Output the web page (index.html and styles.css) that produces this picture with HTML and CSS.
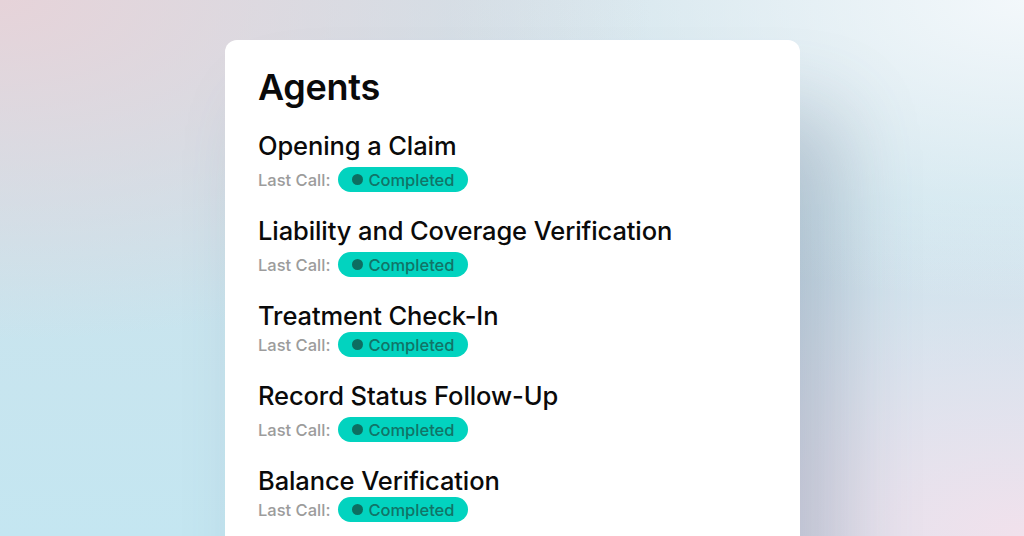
FILE: index.html
```html
<!DOCTYPE html>
<html lang="en">
<head>
    <meta charset="UTF-8">
    <meta name="viewport" content="width=device-width, initial-scale=1.0">
    <title>Agents</title>
    <link rel="stylesheet" href="styles.css">
</head>
<body>
    <div class="card">
        <h1>Agents</h1>

        <div class="agent">
            <h2>Opening a Claim</h2>
            <div class="last-call">
                <span class="label">Last Call:</span>
                <span class="badge"><span class="dot"></span>Completed</span>
            </div>
        </div>

        <div class="agent">
            <h2>Liability and Coverage Verification</h2>
            <div class="last-call">
                <span class="label">Last Call:</span>
                <span class="badge"><span class="dot"></span>Completed</span>
            </div>
        </div>

        <div class="agent tight">
            <h2>Treatment Check-In</h2>
            <div class="last-call">
                <span class="label">Last Call:</span>
                <span class="badge"><span class="dot"></span>Completed</span>
            </div>
        </div>

        <div class="agent">
            <h2>Record Status Follow-Up</h2>
            <div class="last-call">
                <span class="label">Last Call:</span>
                <span class="badge"><span class="dot"></span>Completed</span>
            </div>
        </div>

        <div class="agent tight">
            <h2>Balance Verification</h2>
            <div class="last-call">
                <span class="label">Last Call:</span>
                <span class="badge"><span class="dot"></span>Completed</span>
            </div>
        </div>
    </div>
</body>
</html>
```

FILE: styles.css
```css
html, body {
    margin: 0;
    height: 536px;
    overflow: hidden;
}

body {
    font-family: Inter, "Noto Sans", sans-serif;
    background:
        radial-gradient(ellipse at 0 0, #e6d3d9, rgba(230, 211, 217, 0) 45%),
        radial-gradient(ellipse at 100% 0, #f3f8fb, rgba(243, 248, 251, 0) 40%),
        radial-gradient(ellipse at 100% 100%, #f1e1ec, rgba(241, 225, 236, 0) 45%),
        linear-gradient(180deg, #cfe2ea, #c4e6f1);
    padding-top: 40px;
    box-sizing: border-box;
}

.card {
    width: 575px;
    height: 520px;
    margin-left: 225px;
    background: #fff;
    border-radius: 12px;
    padding: 26px 33px 0;
    box-sizing: border-box;
    box-shadow: 40px 70px 80px rgba(90, 100, 130, 0.28);
    color: #0a0a0a;
}

h1 {
    margin: 0 0 22px;
    font-size: 36px;
    line-height: 42px;
    font-weight: 600;
    letter-spacing: -0.3px;
}

.agent {
    margin-bottom: 23px;
}

h2 {
    margin: 0 0 6px;
    font-size: 25.5px;
    line-height: 31px;
    font-weight: 500;
    letter-spacing: -0.1px;
}

.tight h2 {
    margin-bottom: 1px;
}

.last-call {
    display: flex;
    align-items: center;
    gap: 8px;
}

.label {
    font-size: 16.5px;
    font-weight: 500;
    color: #9c9c9c;
}

.badge {
    display: inline-flex;
    align-items: center;
    gap: 5px;
    height: 25px;
    padding: 0 13px 0 14px;
    border-radius: 13px;
    background: #02d3bf;
    color: #117467;
    font-size: 16.5px;
    font-weight: 500;
}

.dot {
    width: 11px;
    height: 11px;
    border-radius: 50%;
    background: #0d6e61;
}
```
